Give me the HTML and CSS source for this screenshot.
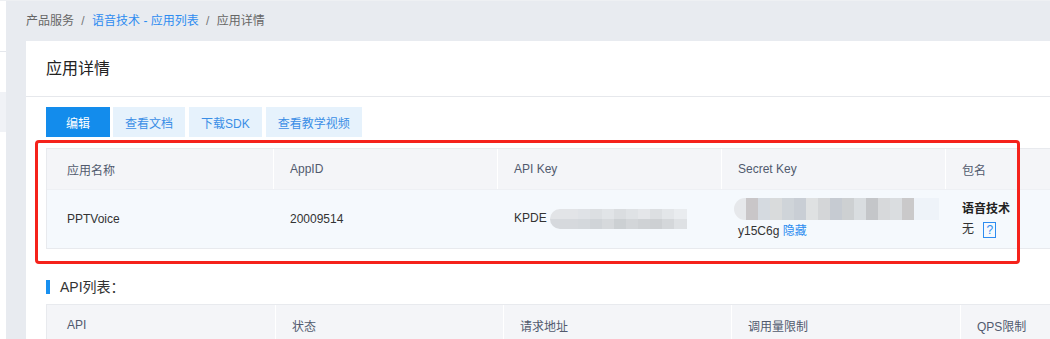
FILE: index.html
```html
<!DOCTYPE html>
<html lang="zh-CN">
<head>
    <meta charset="UTF-8">
    <meta name="viewport" content="width=device-width, initial-scale=1.0">
    <title>应用详情</title>
    <link rel="stylesheet" href="styles.css">
</head>
<body>
    <div class="layout">
        <!-- 左侧菜单（只露出一条边） -->
        <aside class="sidebar">
            <div class="side-item"></div>
            <div class="side-item"></div>
            <div class="side-item active"></div>
        </aside>

        <main class="main">
            <div class="breadcrumb">
                <span>产品服务</span>
                <span class="sep">/</span>
                <a href="#">语音技术 - 应用列表</a>
                <span class="sep">/</span>
                <span>应用详情</span>
            </div>

            <section class="panel">
                <div class="panel-head">应用详情</div>

                <div class="panel-body">
                    <div class="actions">
                        <button class="btn btn-primary">编辑</button>
                        <button class="btn">查看文档</button>
                        <button class="btn">下载SDK</button>
                        <button class="btn">查看教学视频</button>
                    </div>

                    <div class="marked">
                        <div class="table app-table">
                            <div class="row thead">
                                <div class="cell">应用名称</div>
                                <div class="cell">AppID</div>
                                <div class="cell">API Key</div>
                                <div class="cell">Secret Key</div>
                                <div class="cell">包名</div>
                            </div>
                            <div class="row tbody">
                                <div class="cell">PPTVoice</div>
                                <div class="cell">20009514</div>
                                <div class="cell">KPDE<span class="blur blur-api"></span></div>
                                <div class="cell stack">
                                    <span class="blur blur-secret"></span>
                                    <span>y15C6g <a href="#">隐藏</a></span>
                                </div>
                                <div class="cell stack">
                                    <b>语音技术</b>
                                    <span>无 <span class="help">?</span></span>
                                </div>
                            </div>
                        </div>
                    </div>

                    <h3 class="section-title">API列表：</h3>

                    <div class="table api-table">
                        <div class="row thead">
                            <div class="cell">API</div>
                            <div class="cell">状态</div>
                            <div class="cell">请求地址</div>
                            <div class="cell">调用量限制</div>
                            <div class="cell">QPS限制</div>
                        </div>
                    </div>
                </div>
            </section>
        </main>
    </div>
</body>
</html>
```

FILE: styles.css
```css
* {
    margin: 0;
    padding: 0;
    box-sizing: border-box;
}

body {
    font-family: "Liberation Sans", "Noto Sans CJK SC", sans-serif;
    font-size: 12px;
    color: #333;
    background: #e8ebf0;
    height: 339px;
    overflow: hidden;
}

a {
    color: #2d8cf0;
    text-decoration: none;
}

.layout {
    display: flex;
    height: 100%;
    border-top: 1px solid #eef0f3;
}

/* 侧边栏 */
.sidebar {
    width: 6px;
    flex-shrink: 0;
    background: #fff;
}

.side-item {
    height: 51px;
    border-bottom: 1px solid #e4e7ec;
}

.side-item + .side-item {
    height: 40px;
    border-bottom: none;
}

.side-item.active {
    background: #f0f2f6;
}

.main {
    flex: 1;
    padding-left: 20px;
    min-width: 0;
}

.breadcrumb {
    height: 40px;
    line-height: 40px;
    color: #666;
    white-space: nowrap;
}

.breadcrumb .sep {
    margin: 0 4px;
    color: #777;
}

/* 面板 */
.panel {
    background: #fff;
    height: 100%;
    overflow: hidden;
}

.panel-head {
    height: 56px;
    line-height: 55px;
    padding-left: 20px;
    font-size: 16px;
    color: #222;
    border-bottom: 1px solid #e6e8ec;
}

.panel-body {
    padding: 10px 0 0 20px;
}

.actions {
    display: flex;
    gap: 4px;
}

.btn {
    height: 30px;
    padding: 0 12px;
    border: none;
    font-family: inherit;
    font-size: 12px;
    color: #3a8ee6;
    background: #e6f2fc;
    cursor: pointer;
}

.btn-primary {
    width: 64px;
    margin-right: -1px;
    color: #fff;
    background: #138cec;
}

/* 表格 */
.table {
    border: 1px solid #e8eaee;
    border-right: none;
    width: 1200px;
}

.row {
    display: grid;
    align-items: center;
}

.app-table .row {
    grid-template-columns: 226px 224px 224px 224px 224px;
}

.api-table .row {
    grid-template-columns: 228px 228px 228px 229px 228px;
}

.thead {
    height: 40px;
    background: #f4f5f8;
    color: #515a6e;
}

.thead .cell {
    height: 100%;
    display: flex;
    align-items: center;
}

.thead .cell + .cell {
    border-left: 1px solid #fff;
}

.cell {
    padding-left: 16px;
    white-space: nowrap;
}

.cell:first-child {
    padding-left: 20px;
}

.tbody {
    height: 59px;
    background: #f5f9fd;
    border-top: 1px solid #eef0f4;
    color: #333;
}

.tbody .cell + .cell {
    padding-left: 17px;
}

.stack {
    display: flex;
    flex-direction: column;
    align-items: flex-start;
    gap: 2px;
    line-height: 18px;
}

.stack b {
    color: #222;
}

.help {
    display: inline-block;
    width: 13px;
    height: 16px;
    margin-left: 6px;
    line-height: 14px;
    text-align: center;
    border: 1px solid #2d8cf0;
    color: #2d8cf0;
    font-size: 12px;
    vertical-align: middle;
}

/* 打码区域 */
.blur {
    display: inline-block;
    vertical-align: middle;
}

.blur-api {
    width: 137px;
    height: 20px;
    margin-left: 3px;
    border-radius: 10px 0 0 10px;
    background:
        linear-gradient(90deg, #e2e4e7 0 28px, #dfe2e6 28px 40px, #dcdfe2 40px 52px, #e1e4e7 52px 64px,
            #dadde0 64px 76px, #dfe2e5 76px 88px, #e4e6e9 88px 100px, #dcdfe2 100px 112px, #e3e6e9 112px 124px, #e9ecef 124px) top / 100% 50% no-repeat,
        linear-gradient(90deg, #d6d9dd 0 28px, #d4d8dc 28px 40px, #d0d4d8 40px 52px, #d6d9dc 52px 64px,
            #ccd0d3 64px 76px, #d3d6d9 76px 88px, #cfd2d5 88px 100px, #cdd0d3 100px 112px, #d4d7da 112px 124px, #dee1e4 124px) bottom / 100% 50% no-repeat;
}

.blur-secret {
    width: 205px;
    height: 22px;
    margin-left: -4px;
    border-radius: 11px 0 0 11px;
    background: linear-gradient(90deg,
        #e6e8eb 0 12px, #c9c6c8 12px 24px, #d5dae0 24px 36px, #d9dbdc 36px 48px,
        #cfd4d9 48px 60px, #c9ced5 60px 72px, #dfe1e2 72px 84px, #d4d6d8 84px 96px,
        #c6cbd2 96px 108px, #cdd0d2 108px 120px, #d9dde0 120px 132px, #c4c6c9 132px 144px,
        #d7d9db 144px 156px, #dadde0 156px 168px, #cac9ca 168px 180px, #eef3f9 180px);
}

/* 红色标注框 */
.marked {
    position: relative;
    margin-top: 11px;
}

.marked::after {
    content: "";
    position: absolute;
    top: -8px;
    left: -11px;
    width: 985px;
    bottom: -15px;
    box-sizing: border-box;
    border: 3px solid #f5221b;
    border-radius: 4px;
    pointer-events: none;
}

.section-title {
    margin: 31px 0 10px;
    padding-left: 10px;
    height: 14px;
    line-height: 14px;
    font-size: 14px;
    font-weight: normal;
    color: #333;
    border-left: 4px solid #1890f0;
}
```
